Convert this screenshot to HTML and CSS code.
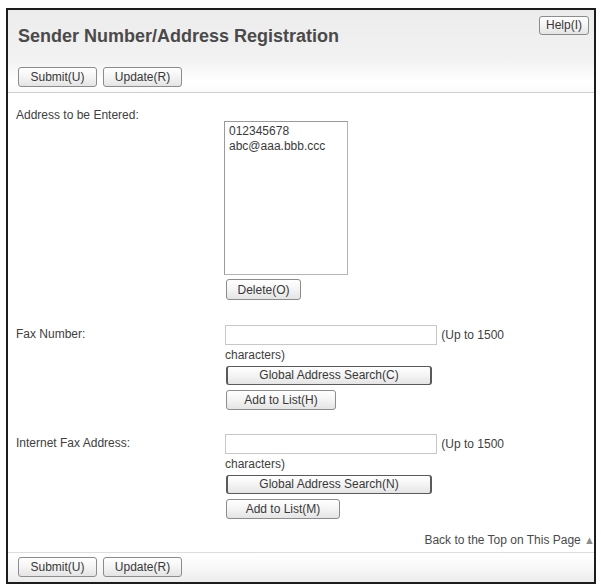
FILE: index.html
```html
<!DOCTYPE html>
<html lang="en">
<head>
<meta charset="utf-8">
<title>Sender Number/Address Registration</title>
<link rel="stylesheet" href="styles.css">
</head>
<body>
<div class="frame">
  <div class="header">
    <div class="title-row">
      <h1 class="title">Sender Number/Address Registration</h1>
      <button class="btn btn-help" type="button">Help(I)</button>
    </div>
    <div class="toolbar">
      <button class="btn btn-std" type="button">Submit(U)</button>
      <button class="btn btn-std" type="button">Update(R)</button>
    </div>
  </div>

  <div class="content">
    <div class="row">
      <div class="label">Address to be Entered:</div>
      <div class="control">
        <div class="listbox" role="listbox">
          <div class="opt">012345678</div>
          <div class="opt">abc@aaa.bbb.ccc</div>
        </div>
        <button class="btn btn-delete" type="button">Delete(O)</button>
      </div>
    </div>

    <div class="row row-field">
      <div class="label">Fax Number:</div>
      <div class="control">
        <div class="field-line"><input class="text-input" type="text"> (Up to 1500 characters)</div>
        <button class="btn btn-search" type="button">Global Address Search(C)</button>
        <button class="btn btn-add" type="button">Add to List(H)</button>
      </div>
    </div>

    <div class="row row-field">
      <div class="label">Internet Fax Address:</div>
      <div class="control">
        <div class="field-line"><input class="text-input" type="text"> (Up to 1500 characters)</div>
        <button class="btn btn-search" type="button">Global Address Search(N)</button>
        <button class="btn btn-add btn-add-m" type="button">Add to List(M)</button>
      </div>
    </div>

    <div class="back-top">Back to the Top on This Page <span class="tri">▲</span></div>
  </div>

  <div class="footer">
    <button class="btn btn-std" type="button">Submit(U)</button>
    <button class="btn btn-std" type="button">Update(R)</button>
  </div>
</div>
</body>
</html>
```

FILE: styles.css
```css
* { box-sizing: border-box; }

body {
  margin: 0;
  background: #ffffff;
  font-family: "Liberation Sans", Arial, sans-serif;
  font-size: 12px;
  color: #3a3a3a;
}

.frame {
  margin: 8px 0 0 6px;
  width: 590px;
  border: 2px solid #1c1c1c;
  background: #ffffff;
}

.header {
  padding: 0 5px 5px 10px;
  background: linear-gradient(to bottom, #ececec 0%, #f2f2f2 60%, #ffffff 88%, #fbfbfb 100%);
  border-bottom: 1px solid #cfcfcf;
}

.title-row {
  display: flex;
  justify-content: space-between;
  align-items: flex-start;
}

.title {
  margin: 15px 0 0 0;
  font-size: 18px;
  line-height: 22px;
  font-weight: bold;
  color: #4a4a4a;
}

.toolbar {
  display: flex;
  gap: 6px;
  margin-top: 20px;
}

.btn {
  display: block;
  height: 20px;
  padding: 0 6px;
  font-family: "Liberation Sans", Arial, sans-serif;
  font-size: 12px;
  line-height: 18px;
  color: #383838;
  background: linear-gradient(to bottom, #ffffff 0%, #f4f4f4 50%, #e4e4e4 100%);
  border: 1px solid #8c8c8c;
  border-radius: 3px;
  text-align: center;
}

.btn-help {
  margin-top: 6px;
  width: 50px;
  height: 19px;
  line-height: 17px;
}

.btn-std { width: 79px; }

.content {
  padding: 13px 0 0 8px;
}

.row {
  display: grid;
  grid-template-columns: 209px 310px;
}

.label {
  padding-top: 2px;
  line-height: 15px;
  color: #404040;
}

.listbox {
  margin: 15px 0 0 -1px;
  width: 124px;
  height: 154px;
  border: 1px solid #b4b4b4;
  border-left-color: #9a9a9a;
  border-top-color: #9a9a9a;
  padding: 2px 4px;
  line-height: 15px;
  color: #3a3a3a;
  background: #ffffff;
}

.btn-delete {
  margin: 4px 0 0 1px;
  width: 75px;
  height: 21px;
}

.row-field {
  margin-top: 25px;
}

.row-field + .row-field {
  margin-top: 24px;
}

.field-line {
  line-height: 15px;
  color: #404040;
}

.text-input {
  display: inline-block;
  width: 212px;
  height: 20px;
  margin: 0 1px 3px 0;
  border: 1px solid #c8c8c8;
  background: #ffffff;
  padding: 0;
  font: 12px "Liberation Sans", Arial, sans-serif;
  vertical-align: baseline;
}

.btn-search {
  margin: 3px 0 0 1px;
  width: 206px;
  height: 19px;
  line-height: 17px;
  border-color: #5a5a5a;
  border-left-width: 2px;
  border-right-width: 2px;
}

.btn-add {
  margin: 5px 0 0 1px;
  width: 110px;
}

.btn-add-m { width: 114px; }

.back-top {
  margin-top: 14px;
  margin-right: -1px;
  text-align: right;
  line-height: 15px;
  color: #4a4a4a;
}

.tri {
  font-size: 11px;
  color: #8e8e8e;
}

.footer {
  display: flex;
  gap: 6px;
  margin-top: 4px;
  padding: 4px 0 5px 10px;
  border-top: 1px solid #dddddd;
  background: linear-gradient(to bottom, #ffffff 0%, #f6f6f6 60%, #ececec 100%);
}
```
